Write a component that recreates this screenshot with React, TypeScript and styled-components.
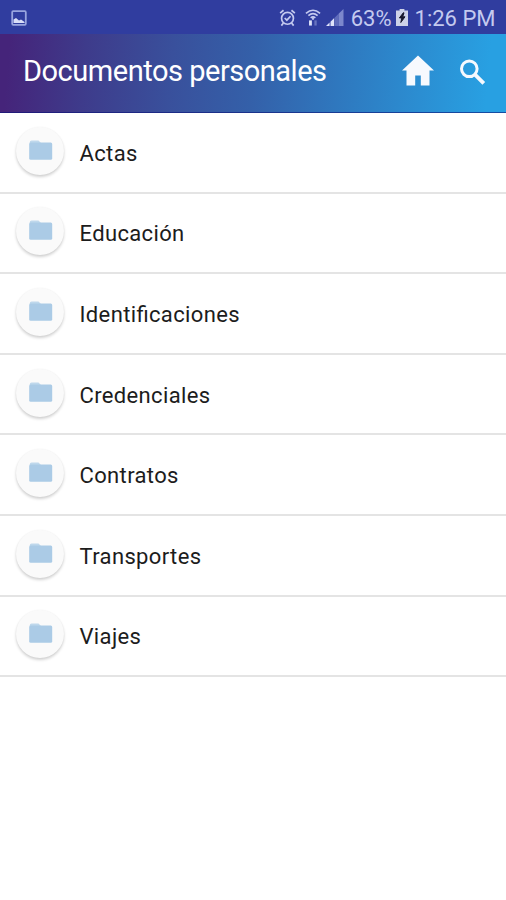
import React from 'react';
import styled, { createGlobalStyle } from 'styled-components';

const GlobalStyle = createGlobalStyle`
  *, *::before, *::after { box-sizing: border-box; }
  body { margin: 0; background: #fff; font-family: Roboto, sans-serif; }
`;

const Screen = styled.div`
  display: flex;
  flex-direction: column;
  width: 100%;
  min-height: 900px;
  background: #fff;
  overflow: hidden;
`;

const StatusBar = styled.div`
  display: flex;
  align-items: center;
  justify-content: space-between;
  height: 34px;
  padding: 2px 10.5px 0 11px;
  background: #303d9f;
  color: #c4caef;
`;

const StatusGroup = styled.div`
  display: flex;
  align-items: center;
`;

const StatusIcon = styled.svg<{ $gap?: number }>`
  display: block;
  flex: none;
  margin-right: ${({ $gap = 0 }) => $gap}px;
`;

const StatusText = styled.span<{ $gap?: number }>`
  padding-top: 2px;
  font-size: 22px;
  line-height: 30px;
  margin-right: ${({ $gap = 0 }) => $gap}px;
  white-space: nowrap;
`;

const AppBar = styled.header`
  display: flex;
  align-items: center;
  height: 79px;
  padding: 0 20px 4px 23px;
  color: #fff;
  background: linear-gradient(95deg, #45247a 2%, #3e3b8b 17%, #39509c 34%, #3460a9 50%, #2e7cc2 70%, #28a0e2 96%);
  border-bottom: 1px solid rgba(10, 20, 120, 0.6);
`;

const Title = styled.h1`
  flex: 1;
  margin: 0;
  font-size: 29px;
  font-weight: 400;
  line-height: 36px;
  letter-spacing: -0.48px;
  white-space: nowrap;
`;

const ActionButton = styled.button<{ $gap?: number }>`
  display: flex;
  padding: 0;
  margin-right: ${({ $gap = 0 }) => $gap}px;
  border: 0;
  background: none;
  color: #f6f9fe;
`;

const List = styled.ul`
  margin: 0;
  padding: 0;
  list-style: none;
`;

const Row = styled.li`
  display: flex;
  align-items: center;
  gap: 15.5px;
  height: 80.6px;
  padding: 0 16px 3px;
  border-bottom: 2px solid #e4e4e4;
`;

const Avatar = styled.span`
  display: flex;
  align-items: center;
  justify-content: center;
  flex: none;
  width: 48px;
  height: 48px;
  padding: 0 0 1px 1px;
  border-radius: 50%;
  background: #fafafa;
  box-shadow: 0 2px 3px rgba(0, 0, 0, 0.18), 0 0 2px rgba(0, 0, 0, 0.04);
`;

const Label = styled.span`
  padding-top: 6px;
  font-size: 22px;
  line-height: 30px;
  letter-spacing: 0.36px;
  font-feature-settings: 'liga' 1;
  color: #1c1c1c;
`;

const folders = [
  'Actas',
  'Educación',
  'Identificaciones',
  'Credenciales',
  'Contratos',
  'Transportes',
  'Viajes',
];

const FolderIcon = () => (
  <svg width="24" height="21" viewBox="0 0 24 21">
    <path d="M.7 2.5Q.7 .5 2.7 .5H9.5L12 3H.7Z" fill="#bfd8ec" />
    <path d="M.2 4Q.2 2.5 1.7 2.5H21.7Q23.2 2.5 23.2 4V18.3Q23.2 19.8 21.7 19.8H1.7Q.2 19.8 .2 18.3Z" fill="#abcbe6" />
  </svg>
);

export default function App() {
  return (
    <>
      <GlobalStyle />
      <Screen>
        <StatusBar>
          <StatusIcon width="16" height="16" viewBox="0 0 16 16">
            <rect x="1.2" y="1.2" width="13.6" height="13.6" rx="1" fill="none" stroke="#98a4de" strokeWidth="1.8" />
            <path d="M2.5 13V9.5L5 8L8 10.5L10 9.5L13.5 12V13Z" fill="#d9def7" />
          </StatusIcon>
          <StatusGroup>
            <StatusIcon $gap={8.5} width="17" height="18" viewBox="0 0 18 19" fill="none" stroke="#c4caef" strokeWidth="1.8">
              <circle cx="9" cy="9.8" r="6.3" />
              <path d="M1.2 4.4L4.8 1.3M13.2 1.3L16.8 4.4M4.7 14.8L2.5 17.6M13.3 14.8L15.5 17.6M6 9.5L8.3 11.8L12.2 7.6" />
            </StatusIcon>
            <StatusIcon $gap={5.5} width="16" height="19" viewBox="0 0 17 19" fill="none" stroke="#c4caef" strokeWidth="1.7">
              <path d="M1 4.1Q8.5-2.7 16 4.1M3.6 6.5Q8.5 2.1 13.4 6.5M6 8.8Q8.5 6.7 11 8.8" />
              <path d="M8.5 8.3V10.8" strokeWidth="2" />
              <path d="M5.8 11.5V17" strokeWidth="3" stroke="#e1e5fa" />
              <path d="M11.2 11.5V17" strokeWidth="2.5" stroke="#6873bf" />
            </StatusIcon>
            <StatusIcon $gap={6.5} width="18" height="18" viewBox="0 0 18 18">
              <path d="M0 17L3.6 13.5V17ZM4.5 17V12.7L8.2 9.1V17Z" fill="#dfe3fa" />
              <path d="M8.6 17V8.7L12.8 4.6V17Z" fill="#5f6bbb" />
              <path d="M12.8 17V4.6L17.5 0V17Z" fill="#7c87cc" />
            </StatusIcon>
            <StatusText $gap={4.5}>63%</StatusText>
            <StatusIcon $gap={6.5} width="12" height="18" viewBox="0 0 12 18">
              <path d="M3.6 0H8.4V1.6H12V17H0V1.6H3.6Z" fill="#cdd2e8" />
              <path d="M7.3 3.8L3.4 8.9H5.8L4.8 13.5L9 7.8H6.7L8 3.8Z" fill="#17172c" stroke="#17172c" />
            </StatusIcon>
            <StatusText>1:26 PM</StatusText>
          </StatusGroup>
        </StatusBar>
        <AppBar>
          <Title>Documentos personales</Title>
          <ActionButton $gap={24} aria-label="Inicio">
            <svg width="34" height="32" viewBox="0 0 34 32">
              <path d="M17 .5L33 15.5H28.5V30.5H19.8V20.5H14.2V30.5H5.5V15.5H1Z" fill="currentColor" />
            </svg>
          </ActionButton>
          <ActionButton aria-label="Buscar">
            <svg width="27" height="27" viewBox="0 0 27 27" fill="none" stroke="currentColor">
              <circle cx="10.3" cy="10.8" r="7.8" strokeWidth="3" />
              <path d="M15.8 16.3L24.8 25.3" strokeWidth="3.8" />
            </svg>
          </ActionButton>
        </AppBar>
        <List>
          {folders.map((name) => (
            <Row key={name}>
              <Avatar>
                <FolderIcon />
              </Avatar>
              <Label>{name}</Label>
            </Row>
          ))}
        </List>
      </Screen>
    </>
  );
}
